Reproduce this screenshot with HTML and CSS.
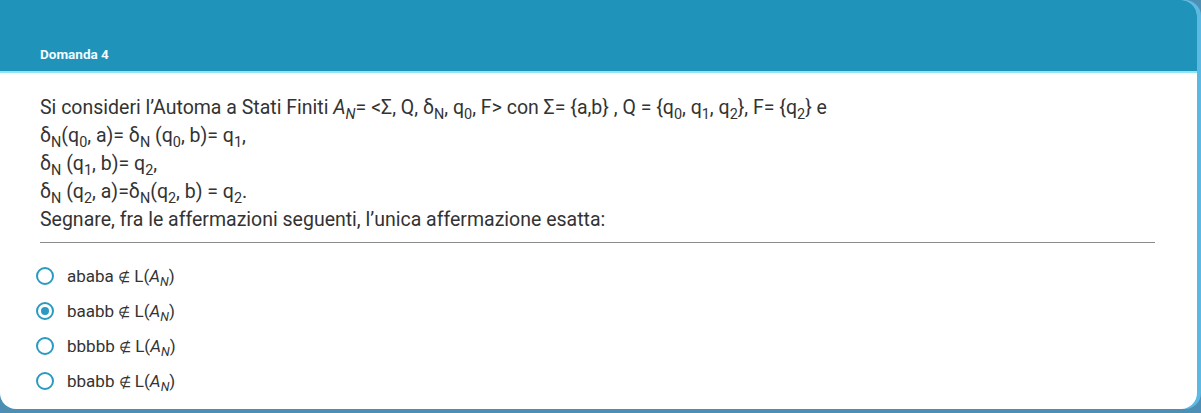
FILE: index.html
```html
<!DOCTYPE html>
<html lang="it">
<head>
<meta charset="utf-8">
<link rel="stylesheet" href="styles.css">
</head>
<body>
<div class="card">
  <div class="head"><span class="title">Domanda 4</span></div>
  <div class="body">
    <div class="question">
      <div class="line">Si consideri l’Automa a Stati Finiti <i>A<sub>N</sub></i>= &lt;Σ, Q, δ<sub>N</sub>, q<sub>0</sub>, F&gt; con Σ= {a,b} , Q = {q<sub>0</sub>, q<sub>1</sub>, q<sub>2</sub>}, F= {q<sub>2</sub>} e</div>
      <div class="line">δ<sub>N</sub>(q<sub>0</sub>, a)= δ<sub>N</sub> (q<sub>0</sub>, b)= q<sub>1</sub>,</div>
      <div class="line">δ<sub>N</sub> (q<sub>1</sub>, b)= q<sub>2</sub>,</div>
      <div class="line">δ<sub>N</sub> (q<sub>2</sub>, a)=δ<sub>N</sub>(q<sub>2</sub>, b) = q<sub>2</sub>.</div>
      <div class="line">Segnare, fra le affermazioni seguenti, l’unica affermazione esatta:</div>
    </div>
    <div class="rule"></div>
    <div class="options">
      <label class="opt"><span class="radio"></span><span>ababa <span class="notin">∉</span> L(<i>A<sub>N</sub></i>)</span></label>
      <label class="opt"><span class="radio on"></span><span>baabb <span class="notin">∉</span> L(<i>A<sub>N</sub></i>)</span></label>
      <label class="opt"><span class="radio"></span><span>bbbbb <span class="notin">∉</span> L(<i>A<sub>N</sub></i>)</span></label>
      <label class="opt"><span class="radio"></span><span>bbabb <span class="notin">∉</span> L(<i>A<sub>N</sub></i>)</span></label>
    </div>
  </div>
</div>
</body>
</html>
```
FILE: styles.css
```css
html, body { margin: 0; padding: 0; }
body {
  width: 1201px;
  height: 413px;
  background: #4d8fb4;
  font-family: Roboto, "Liberation Sans", sans-serif;
  overflow: hidden;
}
.card {
  width: 1197px;
  height: 409px;
  background: #fff;
  border-radius: 0 16px 16px 16px;
  overflow: hidden;
  box-shadow: 4px 0 0 #5bb9e4;
  display: flex;
  flex-direction: column;
}
.head {
  height: 73px;
  background: #1f93b9;
  border-bottom: 2px solid #8fe6f5;
  display: flex;
  align-items: flex-end;
  padding: 0 0 9px 40px;
  box-sizing: border-box;
}
.title {
  color: #f2fbff;
  font-weight: 700;
  font-size: 13.5px;
}
.body {
  padding: 21px 42px 0 40px;
}
.question {
  color: #333;
  font-size: 19.5px;
  line-height: 28px;
}
.line { white-space: nowrap; }
sub {
  font-size: 0.74em;
  vertical-align: -0.35em;
  line-height: 0;
}
.rule {
  height: 1px;
  background: #8a8a8a;
  margin-top: 8px;
}
.options {
  display: flex;
  flex-direction: column;
  gap: 11px;
  padding-top: 21px;
}
.opt {
  display: flex;
  align-items: center;
  gap: 13px;
  height: 24px;
  font-size: 17px;
  color: #333;
  margin-left: -4px;
}
.notin {
  font-size: 0.85em;
}
.radio {
  width: 14px;
  height: 14px;
  border: 2px solid #2b9ac2;
  border-radius: 50%;
  box-sizing: content-box;
  position: relative;
  flex: none;
}
.radio.on::after {
  content: "";
  position: absolute;
  left: 3px;
  top: 3px;
  width: 8px;
  height: 8px;
  border-radius: 50%;
  background: #2b9ac2;
}
```
